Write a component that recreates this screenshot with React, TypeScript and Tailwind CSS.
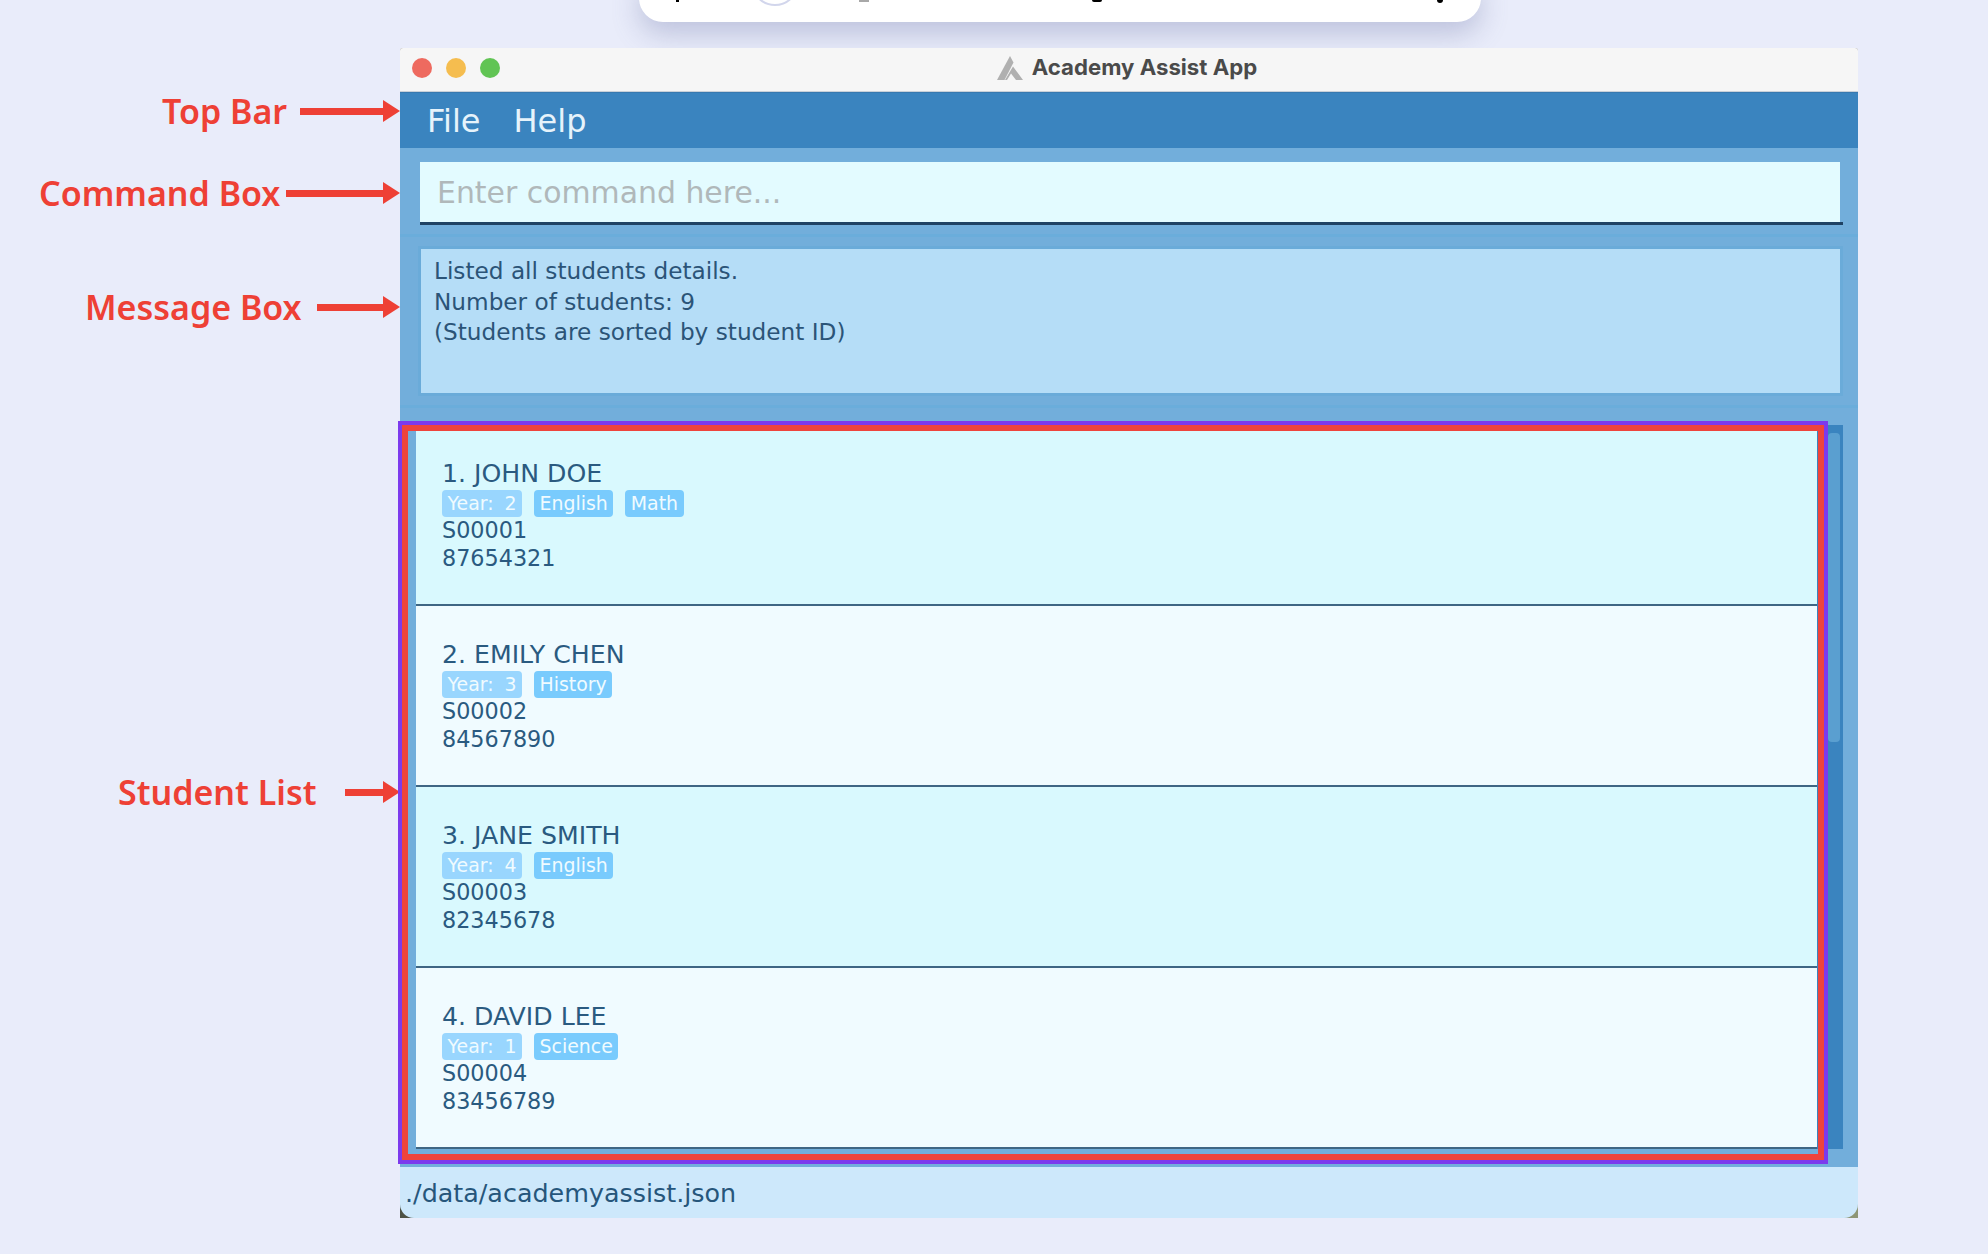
import type { ReactNode } from 'react';

const STUDENTS = [
  { name: '1. JOHN DOE', year: 'Year: 2', tags: ['English', 'Math'], id: 'S00001', phone: '87654321' },
  { name: '2. EMILY CHEN', year: 'Year: 3', tags: ['History'], id: 'S00002', phone: '84567890' },
  { name: '3. JANE SMITH', year: 'Year: 4', tags: ['English'], id: 'S00003', phone: '82345678' },
  { name: '4. DAVID LEE', year: 'Year: 1', tags: ['Science'], id: 'S00004', phone: '83456789' },
];

function Tag({ children, light }: { children: ReactNode; light?: boolean }) {
  return (
    <span className={`flex h-[27px] items-center rounded-[4px] px-[5.5px] text-[18.9px] leading-none text-[#f0fbff] ${light ? 'bg-[#99d6fe] [word-spacing:5px]' : 'bg-[#79cbfd]'}`}>
      {children}
    </span>
  );
}

function StudentCard({ student, odd }: { student: (typeof STUDENTS)[number]; odd: boolean }) {
  return (
    <div className={`h-[181px] border-b-2 border-[#3f6684] pl-[26px] pt-[34px] text-[#2a5a80] ${odd ? 'bg-[#d9f9fe]' : 'bg-[#f0fbff]'}`}>
      <p className="h-[31px] text-[25.2px] leading-[30px]">{student.name}</p>
      <div className="flex gap-3">
        <Tag light>{student.year}</Tag>
        {student.tags.map((t) => <Tag key={t}>{t}</Tag>)}
      </div>
      <p className="text-[22.3px] leading-[27.5px]">{student.id}</p>
      <p className="text-[22.3px] leading-[28.5px]">{student.phone}</p>
    </div>
  );
}

// red callout on the left of the window, its arrow ends on the window edge
function Callout({ label, box, shaft }: { label: string; box: string; shaft: string }) {
  return (
    <div className={`absolute flex items-center justify-between font-['Noto_Sans',sans-serif] text-[34px] font-semibold leading-none text-[#ee4035] ${box}`}>
      <span>{label}</span>
      <span className="flex items-center">
        <span className={`h-[7px] bg-[#ee4035] ${shaft}`} />
        <svg width="17" height="22" viewBox="0 0 17 22" className="-ml-px"><path d="M0 0L17 11L0 22Z" fill="#ee4035" /></svg>
      </span>
    </div>
  );
}

export default function App() {
  return (
    <div className="relative h-[1254px] w-[1988px] overflow-hidden bg-[#e9ecfa] pl-[400px] pt-[48px] font-['DejaVu_Sans',sans-serif]">
      {/* bottom of the floating pill, cut off by the top of the shot */}
      <div className="absolute left-[639px] top-[-30px] h-[52px] w-[842px] rounded-[24px] bg-white shadow-[0_12px_28px_rgba(95,105,160,0.32)]">
        <span className="absolute bottom-[20px] left-[37px] h-[2px] w-[3px] bg-black" />
        <span className="absolute bottom-[16px] left-[112px] h-[48px] w-[48px] rounded-full border-2 border-[#d2d6ec]" />
        <span className="absolute bottom-[20px] left-[220px] h-[2px] w-[10px] bg-[#a8a8a8]" />
        <span className="absolute bottom-[20px] left-[453px] h-[2px] w-[10px] rounded-b-full bg-black" />
        <span className="absolute bottom-[19px] left-[798px] h-[3px] w-[6px] rounded-b-full bg-black" />
      </div>

      <Callout label="Top Bar" box="left-[162px] top-[94px] w-[238px]" shaft="w-[84px]" />
      <Callout label="Command Box" box="left-[39px] top-[176px] w-[361px]" shaft="w-[98px]" />
      <Callout label="Message Box" box="left-[85px] top-[290px] w-[315px]" shaft="w-[67px]" />
      <Callout label="Student List" box="left-[118px] top-[775px] w-[282px]" shaft="w-[39px]" />

      <div className="relative w-[1458px] text-[#2a5a80]">
        <div className="rounded-t-[3px] bg-[#8a8a80]">
          <div className="relative flex h-[44px] items-center justify-center rounded-t-[3px] border-b border-[#c9d1d9] bg-[#f6f6f6] pb-[4px]">
            <div className="absolute left-[12px] flex gap-[14px]">
              <span className="h-[20px] w-[20px] rounded-full bg-[#ee6a5f]" />
              <span className="h-[20px] w-[20px] rounded-full bg-[#f5bd4f]" />
              <span className="h-[20px] w-[20px] rounded-full bg-[#61c454]" />
            </div>
            <div className="-ml-[4px] flex items-center gap-[9px]">
              <svg width="26" height="24" viewBox="0 0 26 24" fill="#b0b0b0">
                <path d="M13 0L16.5 6.5L7.5 24H0Z" />
                <path d="M16 10.5L26 24H19L14 17.5L10 24H8Z" />
              </svg>
              <span className="font-['Inter',sans-serif] text-[22.2px] font-bold leading-none text-[#4a4a4a]">Academy Assist App</span>
            </div>
          </div>
        </div>

        <div className="flex h-[56px] items-center gap-[33px] border-t border-[#3779b0] bg-[#3a84bf] pl-[27px] text-[32px] text-[#e6f3fb]">
          <span>File</span>
          <span>Help</span>
        </div>

        <div className="h-[86px] bg-[#72aedb] pl-[20px] pr-[15px] pt-[14px]">
          <div className="border-b-[3px] border-[#1f4264]">
            <div className="mr-[3px] flex h-[60px] items-center bg-[#e3fbff] pl-[17px] pt-[2px] text-[29.9px] text-[#b0b8ba]">
              Enter command here...
            </div>
          </div>
        </div>

        <div className="h-[174px] border-y-[3px] border-[#6aaddb] bg-[#72aedb] pl-[18px] pr-[15px] pt-[9px]">
          <div className="h-[150px] border-[3px] border-[#6aabd9] bg-[#b5ddf7] pl-[13px] pt-[7px] text-[23.2px] leading-[30.7px] text-[#2b5478]">
            <p>Listed all students details.</p>
            <p>Number of students: 9</p>
            <p>(Students are sorted by student ID)</p>
          </div>
        </div>

        <div className="relative h-[759px] bg-[#72aedb] pl-[16px] pr-[15px] pt-[16.5px]">
          <div className="flex h-[724px]">
            <div className="w-[1401px]">
              {STUDENTS.map((s, i) => <StudentCard key={s.id} student={s} odd={i % 2 === 0} />)}
            </div>
            <div className="flex-1 bg-[#3a84bf] pl-[11px] pr-[3px] pt-[8px]">
              <div className="h-[309px] rounded-[4px] bg-[#5a9fd0]" />
            </div>
          </div>
          {/* annotation frame over the list */}
          <div className="absolute left-[-2.5px] top-[13px] h-[743px] w-[1430.5px] border-4 border-[#7c3aed]">
            <div className="h-full w-full border-[6px] border-[#ee443c]" />
          </div>
        </div>

        <div className="bg-linear-to-r from-[#4d5245] to-[#8e9676]">
          <div className="flex h-[51px] items-center rounded-b-[14px] bg-[#cde8fb] pl-[5px] pt-[1px] text-[25.4px] text-[#26567b]">
            ./data/academyassist.json
          </div>
        </div>
      </div>
    </div>
  );
}
